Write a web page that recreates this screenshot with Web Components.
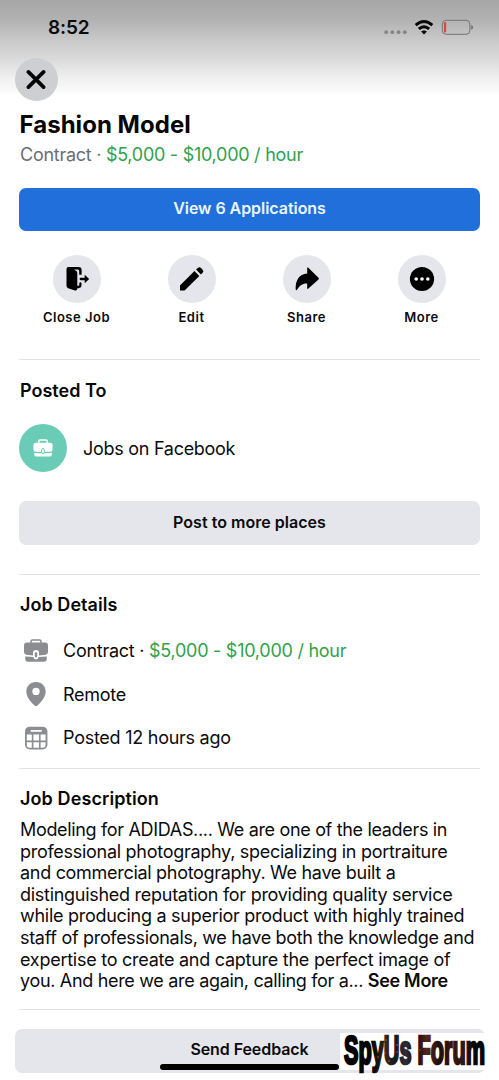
<!DOCTYPE html>
<html lang="en">
<head>
<meta charset="utf-8">
<title>Fashion Model</title>
<style>
html,body{margin:0;padding:0;background:#fff}
body{width:499px;height:1080px;overflow:hidden;font-family:Inter,"Liberation Sans",sans-serif;color:#0b0b0d}
</style>
</head>
<body>
<job-screen></job-screen>
<script>
const define = (name, html) => {
  const template = document.createElement('template');
  template.innerHTML = html;
  customElements.define(name, class extends HTMLElement {
    constructor() {
      super();
      this.attachShadow({ mode: 'open' }).append(template.content.cloneNode(true));
    }
  });
};

define('status-bar', `
<style>
:host{display:flex;height:54px;box-sizing:border-box;padding:0 26px 0 48px;justify-content:space-between;align-items:center}
.time{font-size:19px;font-weight:600;letter-spacing:-.1px;line-height:22px;padding-top:2px}
svg{display:block}
</style>
<span class="time">8:52</span>
<svg width="90" height="20" viewBox="383 17 90 20">
  <g fill="#858585"><circle cx="386.2" cy="32.2" r="1.9"/><circle cx="392.4" cy="32.2" r="1.9"/><circle cx="398.6" cy="32.2" r="1.9"/><circle cx="404.8" cy="32.2" r="1.9"/></g>
  <g fill="none" stroke="#050505" stroke-width="2.9"><path d="M415.7 25.2Q424 18 432.3 25.2"/><path d="M418.8 28.9Q424 24.6 429.2 28.9"/></g>
  <path fill="#050505" d="M421.1 31.6Q424 29.2 426.9 31.6L424 34.4Z"/>
  <rect x="442.3" y="20.3" width="27.6" height="14" rx="3.8" fill="none" stroke="#747474" stroke-width="1"/>
  <rect x="443.9" y="22.1" width="2.3" height="10.4" rx="1.1" fill="#e4443e"/>
  <path fill="#666" d="M471.3 24.9Q473 25.5 473 27.3T471.3 29.7Z"/>
</svg>`);

define('close-button', `
<style>
:host{display:grid;place-items:center;width:43px;height:43px;border-radius:50%;background:#cdcfd3;margin:4px 0 0 15px}
svg{display:block}
</style>
<svg width="21" height="21" viewBox="0 0 21 21"><path d="M2.4 2.9 17.6 18.1M17.6 2.9 2.4 18.1" stroke="#050505" stroke-width="3.7" stroke-linecap="round"/></svg>`);

define('wide-button', `
<style>
:host{display:flex;height:43px;box-sizing:border-box;padding-bottom:3px;border-radius:7px;align-items:center;justify-content:center;background:#e4e6eb;font-size:16px;font-weight:600;letter-spacing:var(--track,-.05px)}
:host([primary]){background:#216fdb;color:#eaf5ff}
</style><slot></slot>`);

define('action-item', `
<style>
:host{display:flex;flex-direction:column;align-items:center;width:115px;font-size:13px;font-weight:600;line-height:16px;letter-spacing:.5px}
.disc{display:grid;place-items:center;width:48px;height:48px;border-radius:50%;background:#e4e6eb;margin-bottom:6px}
</style>
<div class="disc"><slot name="icon"></slot></div><slot></slot>`);

define('content-divider', `<style>:host{display:block;height:1px;background:#e1e2e4;margin:0 19px}</style>`);

define('section-title', `
<style>:host{display:block;font-size:18px;line-height:22px;font-weight:600;padding-left:20px;letter-spacing:.05px;color:#080809}</style><slot></slot>`);

define('detail-row', `
<style>
:host{display:flex;align-items:center;height:43.5px;padding-left:23px;font-size:18px}
.icon{width:26px;height:26px;margin-right:14px}
.text{white-space:nowrap;letter-spacing:-.26px}
</style>
<div class="icon"><slot name="icon"></slot></div><div class="text"><slot></slot></div>`);

define('text-line', `<style>:host{display:block;white-space:pre;height:21.6px;line-height:21.6px;font-size:18px;letter-spacing:var(--track,-.28px)}</style><slot></slot>`);

define('forum-mark', `
<style>:host{display:block;background:#fff;width:147px;height:37px}svg{display:block;overflow:visible}</style>
<svg width="147" height="37" viewBox="0 0 147 37">
  <defs><linearGradient id="flag" x1="0" y1="0" x2="147" y2="0" gradientUnits="userSpaceOnUse">
    <stop offset="0" stop-color="#000"/><stop offset=".2" stop-color="#050505"/><stop offset=".29" stop-color="#342719"/><stop offset=".36" stop-color="#171725"/><stop offset=".43" stop-color="#302d33"/><stop offset=".49" stop-color="#08080a"/><stop offset=".57" stop-color="#572519"/><stop offset=".66" stop-color="#1b100d"/><stop offset=".74" stop-color="#3b1113"/><stop offset=".82" stop-color="#281b16"/><stop offset=".9" stop-color="#070505"/><stop offset="1" stop-color="#000"/>
  </linearGradient></defs>
  <g transform="translate(3 31.3) scale(1 1.8)" font-family="Liberation Sans,sans-serif" font-weight="700" font-size="22.5" fill="url(#flag)" stroke="url(#flag)" stroke-width="1.5">
    <text x="1" y="0" textLength="141" lengthAdjust="spacingAndGlyphs">SpyUs Forum</text>
  </g>
  <g fill="#b4a58b" opacity=".65"><circle cx="44" cy="11" r=".8"/><circle cx="46" cy="7" r=".7"/><circle cx="57" cy="12" r=".8"/><circle cx="45" cy="20" r=".7"/><circle cx="57" cy="19" r=".7"/><circle cx="38" cy="24" r=".8"/><circle cx="49" cy="28" r=".8"/><circle cx="80" cy="17" r=".7"/></g>
</svg>`);

define('job-screen', `
<style>
:host{display:flow-root;position:relative;width:499px;height:1080px;overflow:hidden;background:linear-gradient(#a6a6a6 0,#b2b2b2 20px,#cbcbcb 42px,#dcdcdc 61px,#f0f0f0 78px,#fafafa 91px,#fff 94px)}
h1{margin:9px 0 0 19.5px;font-size:24px;line-height:30px;font-weight:700;letter-spacing:.03px;color:#050505}
.sub{margin:1px 0 0 20px;font-size:18px;line-height:28px;color:#6c6e72;white-space:nowrap;letter-spacing:-.27px}
.pay{color:#31a24c}
.view{margin:19px 19px 0}
.actions{display:flex;margin:24px 0 0 19px;height:104px}
.posted{margin-top:20px;letter-spacing:0}
.place{display:flex;align-items:center;height:48px;margin:22px 0 0 19px;font-size:18px;gap:16px;letter-spacing:-.28px}
.jobs{display:grid;place-items:center;width:48px;height:48px;border-radius:50%;background:#6accb7}
.more{margin:29px 19px 0;height:44px;--track:.03px}
.details{margin:19px 0 13px}
.about{margin-top:19px;letter-spacing:.1px}
.description{margin:9px 0 0 20px;height:190px}
.see{font-weight:600}
.footer{position:relative;margin:19px 14.5px 0}
.feedback{height:44px;padding-bottom:4px;--track:-.08px}
.home{position:absolute;left:145.5px;top:35px;width:179px;height:6px;border-radius:3px;background:#000}
forum-mark{position:absolute;left:325.5px;top:4px}
svg{display:block}
</style>
<status-bar></status-bar>
<close-button></close-button>
<h1>Fashion Model</h1>
<div class="sub">Contract · <span class="pay">$5,000 - $10,000 / hour</span></div>
<wide-button primary class="view">View 6 Applications</wide-button>
<div class="actions">
  <action-item><svg slot="icon" width="26" height="26" viewBox="0 0 26 26"><path d="M2.5 3Q2.5 1.1 4.5 1.1H14.6Q17.6 1.1 17.6 4V8.8H15.2V5Q15.2 3.5 13.8 3.5H10.3L12.6 5.2Q13.3 5.9 13.3 7V22.5Q13.3 25 11 24.5L4.2 22.2Q2.5 21.5 2.5 19.8Z"/><path d="M13 21H14.7Q16.4 21 16.4 19.1V17.5" fill="none" stroke="#050505" stroke-width="2.3" stroke-linecap="round"/><path d="M16.7 13H22" stroke="#050505" stroke-width="2.3" stroke-linecap="round"/><path d="M20.7 8.8 25.2 13 20.7 17.2Z"/></svg>Close Job</action-item>
  <action-item><svg slot="icon" width="26" height="26" viewBox="0 0 26 26"><path d="M1.2 19.2 15.5 5.1 20.3 9.9 6.4 23.7Q5.5 24.6 4.2 24.6H1.7Q1 24.6 1 23.9V20.2Q1 19.6 1.2 19.2ZM17.1 3.5 19 1.7Q20.4.6 21.8 1.8L23.8 3.9Q25 5.3 23.8 6.6L21.9 8.4Z"/></svg>Edit</action-item>
  <action-item><svg slot="icon" width="26" height="26" viewBox="0 0 26 26"><path d="M13.2 2Q13.2 1 14.1 1.6L24.5 11.8Q25.2 12.6 24.5 13.4L14.1 22.8Q13.2 23.4 13.2 22.3V17.4C8.2 17.2 5.5 19.7 3 23.7Q2 24.9 1.7 23.6C1.1 14.5 5.3 7.7 13.2 7.4Z"/></svg>Share</action-item>
  <action-item><svg slot="icon" width="26" height="26" viewBox="0 0 26 26"><circle cx="13" cy="13" r="12.1"/><g fill="#fff"><circle cx="7.2" cy="13" r="1.8"/><circle cx="13" cy="13" r="1.8"/><circle cx="18.8" cy="13" r="1.8"/></g></svg>More</action-item>
</div>
<content-divider></content-divider>
<section-title class="posted">Posted To</section-title>
<div class="place"><div class="jobs"><svg width="20" height="18" viewBox="0 0 20 18"><path fill="none" stroke="#fff" stroke-width="1.4" d="M5.8 4V2.2Q5.8 1 7 1H13Q14.2 1 14.2 2.2V4"/><rect x=".4" y="3.8" width="19.2" height="9" rx="2.4" fill="#fff"/><path fill="#fff" d="M1.2 13.7Q10 15 18.8 13.7V15.8Q18.8 17.4 17 17.4H3Q1.2 17.4 1.2 15.8Z"/><rect x="8.7" y="9.5" width="2.6" height="5" rx="1.2" fill="#fff" stroke="#6accb7"/></svg></div><span>Jobs on Facebook</span></div>
<wide-button class="more">Post to more places</wide-button>
<content-divider style="margin-top:29px"></content-divider>
<section-title class="details">Job Details</section-title>
<detail-row><svg slot="icon" width="26" height="26" viewBox="0 0 26 26"><path fill="none" stroke="#8b8d91" stroke-width="1.5" d="M8 5V3.2Q8 2 9.2 2H16.8Q18 2 18 3.2V5"/><path fill="#8b8d91" d="M4 4.6H22Q25 4.6 25 7.6V14Q25 16.2 22.8 16.7L16 17.6V14.8Q16 12 13 12T10 14.8V17.6L3.2 16.7Q1 16.2 1 14V7.6Q1 4.6 4 4.6ZM3 18.4 10.4 19Q11 21.5 13 21.5T15.6 19L23.8 18.4V20.8Q23.8 23.7 20.8 23.7H5.2Q2.2 23.7 2.2 20.8V18.4Z"/><rect x="11.8" y="14.2" width="2.4" height="5.2" rx="1.1" fill="#8b8d91"/></svg>Contract · <span class="pay">$5,000 - $10,000 / hour</span></detail-row>
<detail-row><svg slot="icon" width="26" height="26" viewBox="0 0 26 26"><path fill="#8b8d91" fill-rule="evenodd" d="M13 1C7.4 1 3.3 5.2 3.3 10.6C3.3 15.4 7 20.4 11.6 24.6Q13 25.6 14.4 24.6C19 20.4 22.7 15.4 22.7 10.6C22.7 5.2 18.6 1 13 1ZM13 6.7A3.7 3.7 0 1 1 13 14.1A3.7 3.7 0 1 1 13 6.7Z"/></svg>Remote</detail-row>
<detail-row><svg slot="icon" width="26" height="26" viewBox="0 0 26 26"><rect x="2" y="1.7" width="22.4" height="22.8" rx="4.8" fill="#8b8d91"/><g fill="#fff"><rect x="7.5" y="5" width="11.4" height="1.7" rx=".8"/><path d="M3.8 9.6H8.8V15.6H3.8ZM10.4 9.6H16V15.6H10.4ZM17.6 9.6H22.6V15.6H17.6ZM3.8 17.2H8.8V22.7H6.8Q3.8 22.7 3.8 19.7ZM10.4 17.2H16V22.7H10.4ZM17.6 17.2H22.6V19.7Q22.6 22.7 19.6 22.7H17.6Z"/></g></svg>Posted 12 hours ago</detail-row>
<content-divider style="margin-top:8.5px"></content-divider>
<section-title class="about">Job Description</section-title>
<div class="description">
<text-line style="--track:-.33px">Modeling for ADIDAS.... We are one of the leaders in</text-line>
<text-line>professional photography, specializing in portraiture</text-line>
<text-line style="--track:-.3px">and commercial photography. We have built a</text-line>
<text-line>distinguished reputation for providing quality service</text-line>
<text-line>while producing a superior product with highly trained</text-line>
<text-line style="--track:-.31px">staff of professionals, we have both the knowledge and</text-line>
<text-line style="--track:-.26px">expertise to create and capture the perfect image of</text-line>
<text-line style="--track:-.32px">you. And here we are again, calling for a... <span class="see">See More</span></text-line>
</div>
<content-divider></content-divider>
<div class="footer"><wide-button class="feedback">Send Feedback</wide-button><div class="home"></div><forum-mark></forum-mark></div>`);
</script>
</body>
</html>
